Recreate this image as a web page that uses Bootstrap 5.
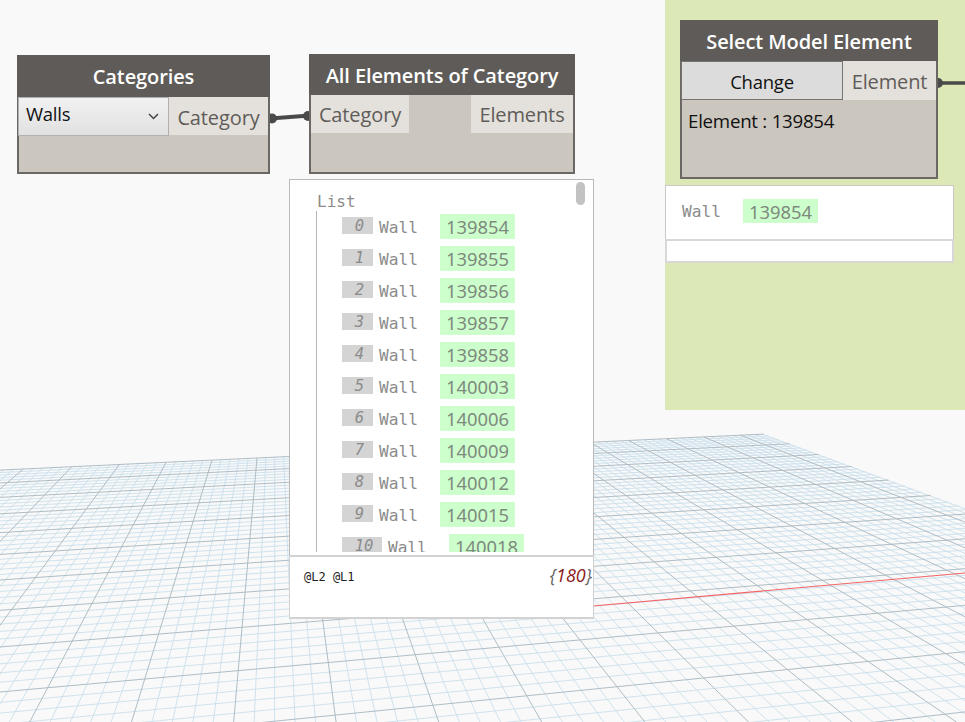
<!DOCTYPE html>
<html lang="en"><head><meta charset="utf-8"><title>Dynamo graph</title>
<link href="https://cdn.jsdelivr.net/npm/bootstrap@5.3.0/dist/css/bootstrap.min.css" rel="stylesheet">
<style>
html,body{margin:0;height:100%;overflow:hidden;background:#f9f9f9}
#canvas{width:965px;height:722px;overflow:hidden;background:#f9f9f9;font-family:"Open Sans","Noto Sans",sans-serif}
#ground,#wires{left:0;top:0}
.grp{left:665px;top:0;width:300px;height:410px;background:#dde8b7}
.gnode{background:#cbc6be;border:2px solid #6a6764;border-top:0}
.ghead{background:#5e5b58;color:#fff;font-weight:600;font-size:20px;line-height:1;margin:0 -2px;padding-top:2px;display:flex;align-items:center;justify-content:center;letter-spacing:-.1px}
.n1{left:17px;top:55px;width:253px;height:119px}.n1 .ghead{height:42px}
.n2{left:309px;top:54px;width:266px;height:120px}.n2 .ghead{height:41px}
.n3{left:680px;top:20px;width:258px;height:159px}.n3 .ghead{height:41px}
.port{background:#e4e1dc;color:#5f5c59;font-size:20px;line-height:1;height:38px;padding-top:1px;display:flex;align-items:center;justify-content:center;letter-spacing:-.12px}
.n1 .port{padding-top:3px}
.n3 .port{height:39px;padding-top:2px}
.pick{width:151px;height:39px;margin-left:-1px;background:linear-gradient(#f1f1f1,#e1e1e1);border:1px solid #b0b0b0;color:#111;font-size:18.5px;padding:0 7px 5px;letter-spacing:-.25px}
.pick svg{width:11px;height:7px;margin-right:2px;margin-top:4px}
.chg{width:162px;height:39px;margin-left:-1px;background:#dcdcdc;border:1px solid #77736f;border-radius:0;color:#111;font-size:18.5px;padding:3px 0 0;letter-spacing:-.25px;line-height:1}
.chg:hover{background:#dcdcdc;color:#111;border-color:#77736f}
.val{color:#111;font-size:18.7px;letter-spacing:-.25px;padding:10px 6px 0;line-height:1.2}
.wpanel{background:#fff;border:1px solid #b9b9b9;color:#8b8b8b;font-family:"DejaVu Sans Mono","Liberation Mono",monospace}
.w1{left:289px;top:179px;width:305px;height:440px}
.wbody{height:375px;overflow:hidden;position:relative}
.wtitle{font-size:16px;line-height:1;padding:14px 0 0 27px;height:31px}
.wtree{margin-left:26px;border-left:1px solid #b5b5b5;height:341px;overflow:hidden;padding-top:3px}
.wrow{height:32px;padding-left:25px;display:flex;align-items:flex-start}
.idx{width:31px;height:17px;margin-top:3px;background:#d4d4d4;font-style:italic;text-align:center;font-size:15.5px;line-height:15px;flex:none;padding:2px 0 0 4px}
.idx.wide{width:40px}
.wname{font-size:16.2px;width:67px;flex:none;padding-left:6px;line-height:25px;margin-top:1px}
.gval{width:75px;height:25px;background:#ccffcc;color:#7f8a7f;font-size:18.4px;line-height:26px;text-align:center;flex:none;font-family:"Noto Sans","Open Sans",sans-serif;letter-spacing:0}
.wfoot{border-top:2px solid #d2d2d2;border-left:1px solid #d2d2d2;border-right:1px solid #d2d2d2;border-bottom:2px solid #d2d2d2;height:64px;margin:0 -1px -1px;padding:7px 0 0 14px;position:relative}
.lv{font-size:12px;color:#222;line-height:16px}
.cnt{right:1px;top:9px;font-size:18px;font-style:italic;line-height:1;color:#8b1a1a;font-family:"Open Sans",sans-serif}
.cnt i{color:#666}
.bar{left:286px;top:2px;width:9px;height:23px;background:#c2c2c2;border-radius:5px}
.w2{left:665px;top:185px;width:289px;height:78px;border-color:#c8c8c8}
.w2r{height:53px;padding:13px 0 0 16px;display:flex}
.w2r .wname{width:61px;padding-left:0;margin-top:0}
.w2f{height:24px;border:2px solid #d8d8d8;margin:0 -1px -1px}
.gval.s{height:24px;line-height:26px}
</style></head><body>
<div id="canvas" class="position-relative">
<svg id="ground" class="position-absolute" width="965" height="722" viewBox="0 0 965 722" aria-hidden="true"></svg>
<div class="grp position-absolute"></div>
<svg id="wires" class="position-absolute" width="965" height="722" viewBox="0 0 965 722" aria-hidden="true">
<g fill="#4a4a4a" stroke="#4a4a4a"><path d="M270 118.500L310 115.500" stroke-width="4" fill="none"/><circle cx="272" cy="118.500" r="5" stroke="none"/><circle cx="308" cy="116" r="5" stroke="none"/><path d="M938 83H965" stroke-width="3.500" fill="none"/><circle cx="938" cy="83" r="5" stroke="none"/></g></svg>

<div class="gnode n1 position-absolute"><div class="ghead">Categories</div>
<div class="d-flex"><div class="pick d-flex align-items-center justify-content-between"><span>Walls</span><svg viewBox="0 0 11 7" aria-hidden="true"><path d="M1 1l4.500 4.500L10 1" fill="none" stroke="#444" stroke-width="1.500"/></svg></div><div class="port flex-grow-1">Category</div></div></div>

<div class="gnode n2 position-absolute"><div class="ghead">All Elements of Category</div>
<div class="d-flex justify-content-between"><div class="port" style="width:98px">Category</div><div class="port" style="width:102px">Elements</div></div></div>

<div class="gnode n3 position-absolute"><div class="ghead">Select Model Element</div>
<div class="d-flex"><button type="button" class="btn chg">Change</button><div class="port flex-grow-1">Element</div></div>
<div class="val">Element : 139854</div></div>

<div class="wpanel w1 position-absolute"><div class="wbody"><div class="wtitle">List</div>
<div class="bar position-absolute"></div>
<div class="wtree">
<div class="wrow"><div class="idx">0</div><div class="wname">Wall</div><div class="gval">139854</div></div>
<div class="wrow"><div class="idx">1</div><div class="wname">Wall</div><div class="gval">139855</div></div>
<div class="wrow"><div class="idx">2</div><div class="wname">Wall</div><div class="gval">139856</div></div>
<div class="wrow"><div class="idx">3</div><div class="wname">Wall</div><div class="gval">139857</div></div>
<div class="wrow"><div class="idx">4</div><div class="wname">Wall</div><div class="gval">139858</div></div>
<div class="wrow"><div class="idx">5</div><div class="wname">Wall</div><div class="gval">140003</div></div>
<div class="wrow"><div class="idx">6</div><div class="wname">Wall</div><div class="gval">140006</div></div>
<div class="wrow"><div class="idx">7</div><div class="wname">Wall</div><div class="gval">140009</div></div>
<div class="wrow"><div class="idx">8</div><div class="wname">Wall</div><div class="gval">140012</div></div>
<div class="wrow"><div class="idx">9</div><div class="wname">Wall</div><div class="gval">140015</div></div>
<div class="wrow"><div class="idx wide">10</div><div class="wname">Wall</div><div class="gval">140018</div></div>
</div></div>
<div class="wfoot"><span class="lv">@L2 @L1</span><span class="cnt position-absolute"><i>{</i>180<i>}</i></span></div></div>

<div class="wpanel w2 position-absolute"><div class="w2r"><div class="wname">Wall</div><div class="gval s">139854</div></div><div class="w2f"></div></div>
</div>
<script>
(function(){
var P=5200,Py=225,Qx=275,Qy=255,NS="http://www.w3.org/2000/svg",g=document.getElementById('ground');
function topPt(k){var x=P-1/(2.2422e-4-1.826e-6*k);return [x,434-.0472*(x-763)];}
function refPt(m){var d=1/(.004926-.00028*m);return [275-18*d/203,255+d];}
function isect(a,b,c,d){var r=[b[0]-a[0],b[1]-a[1]],s=[d[0]-c[0],d[1]-c[1]],t=((c[0]-a[0])*s[1]-(c[1]-a[1])*s[0])/(r[0]*s[1]-r[1]*s[0]);return [a[0]+t*r[0],a[1]+t*r[1]];}
function line(a,b,c,w){var l=document.createElementNS(NS,'line');l.setAttribute('x1',a[0]);l.setAttribute('y1',a[1]);l.setAttribute('x2',b[0]);l.setAttribute('y2',b[1]);l.setAttribute('stroke',c);l.setAttribute('stroke-width',w);g.appendChild(l);}
var apex=[763,434],Q=[Qx,Qy],V=[P,Py];
var passes=[[false,'#c8deeb',.85],[true,'#abb9c2',.95]];
passes.forEach(function(ps){
 for(var i=-3;i<=110;i++){var maj=i%5===0;if(maj!==ps[0])continue;var k=i/5;
  var a=topPt(k);if(a[0]>763||a[0]<-250)continue;
  var dx=a[0]-Qx,dy=a[1]-Qy,t=(760-a[1])/dy;line(a,[a[0]+dx*t,760],ps[1],ps[2]);}
 for(var j=0;j<=70;j++){var maj2=j%5===0;if(maj2!==ps[0])continue;var m=j/5;
  var r=refPt(m);var right=isect(r,V,apex,Q);var sl=(r[1]-Py)/(r[0]-P);
  line([-20,r[1]+sl*(-20-r[0])],right,ps[1],ps[2]);}
});
line([593,606],[965,573],'#f56464',1.1);
})();
</script>
<script src="https://cdn.jsdelivr.net/npm/bootstrap@5.3.0/dist/js/bootstrap.bundle.min.js"></script>
</body></html>
